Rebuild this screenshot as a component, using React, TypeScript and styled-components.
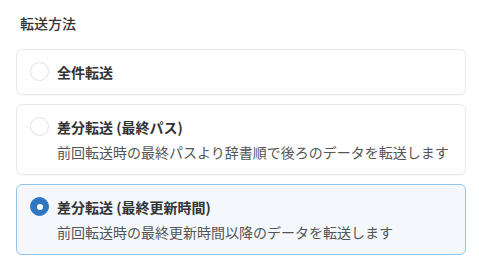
import React, { useState } from 'react'
import styled, { createGlobalStyle } from 'styled-components'

const GlobalStyle = createGlobalStyle`
  html, body {
    margin: 0;
    padding: 0;
    background: #ffffff;
  }
  body {
    font-family: "Noto Sans CJK JP", "Noto Sans", sans-serif;
    color: #333;
  }
`

const Wrapper = styled.div`
  box-sizing: border-box;
  width: 479px;
  padding: 13px 13px 0 16px;
`

const Heading = styled.div`
  font-size: 14px;
  font-weight: 500;
  line-height: 20px;
  color: #333;
  padding-left: 4px;
  margin-bottom: 16px;
`

const OptionList = styled.div`
  display: flex;
  flex-direction: column;
  gap: 9px;
`

const OptionCard = styled.label<{ $active: boolean }>`
  box-sizing: border-box;
  display: flex;
  align-items: flex-start;
  gap: 8px;
  padding: 13px 12px 13px 13px;
  border-radius: 6px;
  border: 1px solid ${p => (p.$active ? '#93c5ec' : '#e8e8e8')};
  background: ${p => (p.$active ? '#f4f8fd' : '#ffffff')};
  box-shadow: 0 1px 2px rgba(0, 0, 0, 0.03);
  cursor: pointer;
`

const Radio = styled.span<{ $checked: boolean }>`
  box-sizing: border-box;
  flex: none;
  width: 19px;
  height: 19px;
  margin-top: -1px;
  border-radius: 50%;
  border: 1px solid ${p => (p.$checked ? '#2f76c2' : '#e0e0e0')};
  background: ${p => (p.$checked ? '#2f76c2' : '#ffffff')};
  display: flex;
  align-items: center;
  justify-content: center;

  &::after {
    content: '';
    width: 6px;
    height: 6px;
    border-radius: 50%;
    background: #ffffff;
    display: ${p => (p.$checked ? 'block' : 'none')};
  }
`

const OptionText = styled.div`
  display: flex;
  flex-direction: column;
  gap: 7px;
`

const OptionTitle = styled.div`
  font-size: 14px;
  font-weight: 700;
  line-height: 18px;
  color: #333;
`

const OptionDesc = styled.div`
  font-size: 14px;
  font-weight: 400;
  line-height: 18px;
  color: #555;
`

const options = [
  { id: 'full', title: '全件転送' },
  {
    id: 'path',
    title: '差分転送 (最終パス)',
    desc: '前回転送時の最終パスより辞書順で後ろのデータを転送します',
  },
  {
    id: 'time',
    title: '差分転送 (最終更新時間)',
    desc: '前回転送時の最終更新時間以降のデータを転送します',
  },
]

export default function App() {
  const [selected, setSelected] = useState('time')

  return (
    <>
      <GlobalStyle />
      <Wrapper>
        <Heading>転送方法</Heading>
        <OptionList>
          {options.map(o => (
            <OptionCard key={o.id} $active={selected === o.id} onClick={() => setSelected(o.id)}>
              <Radio $checked={selected === o.id} />
              <OptionText>
                <OptionTitle>{o.title}</OptionTitle>
                {o.desc && <OptionDesc>{o.desc}</OptionDesc>}
              </OptionText>
            </OptionCard>
          ))}
        </OptionList>
      </Wrapper>
    </>
  )
}
